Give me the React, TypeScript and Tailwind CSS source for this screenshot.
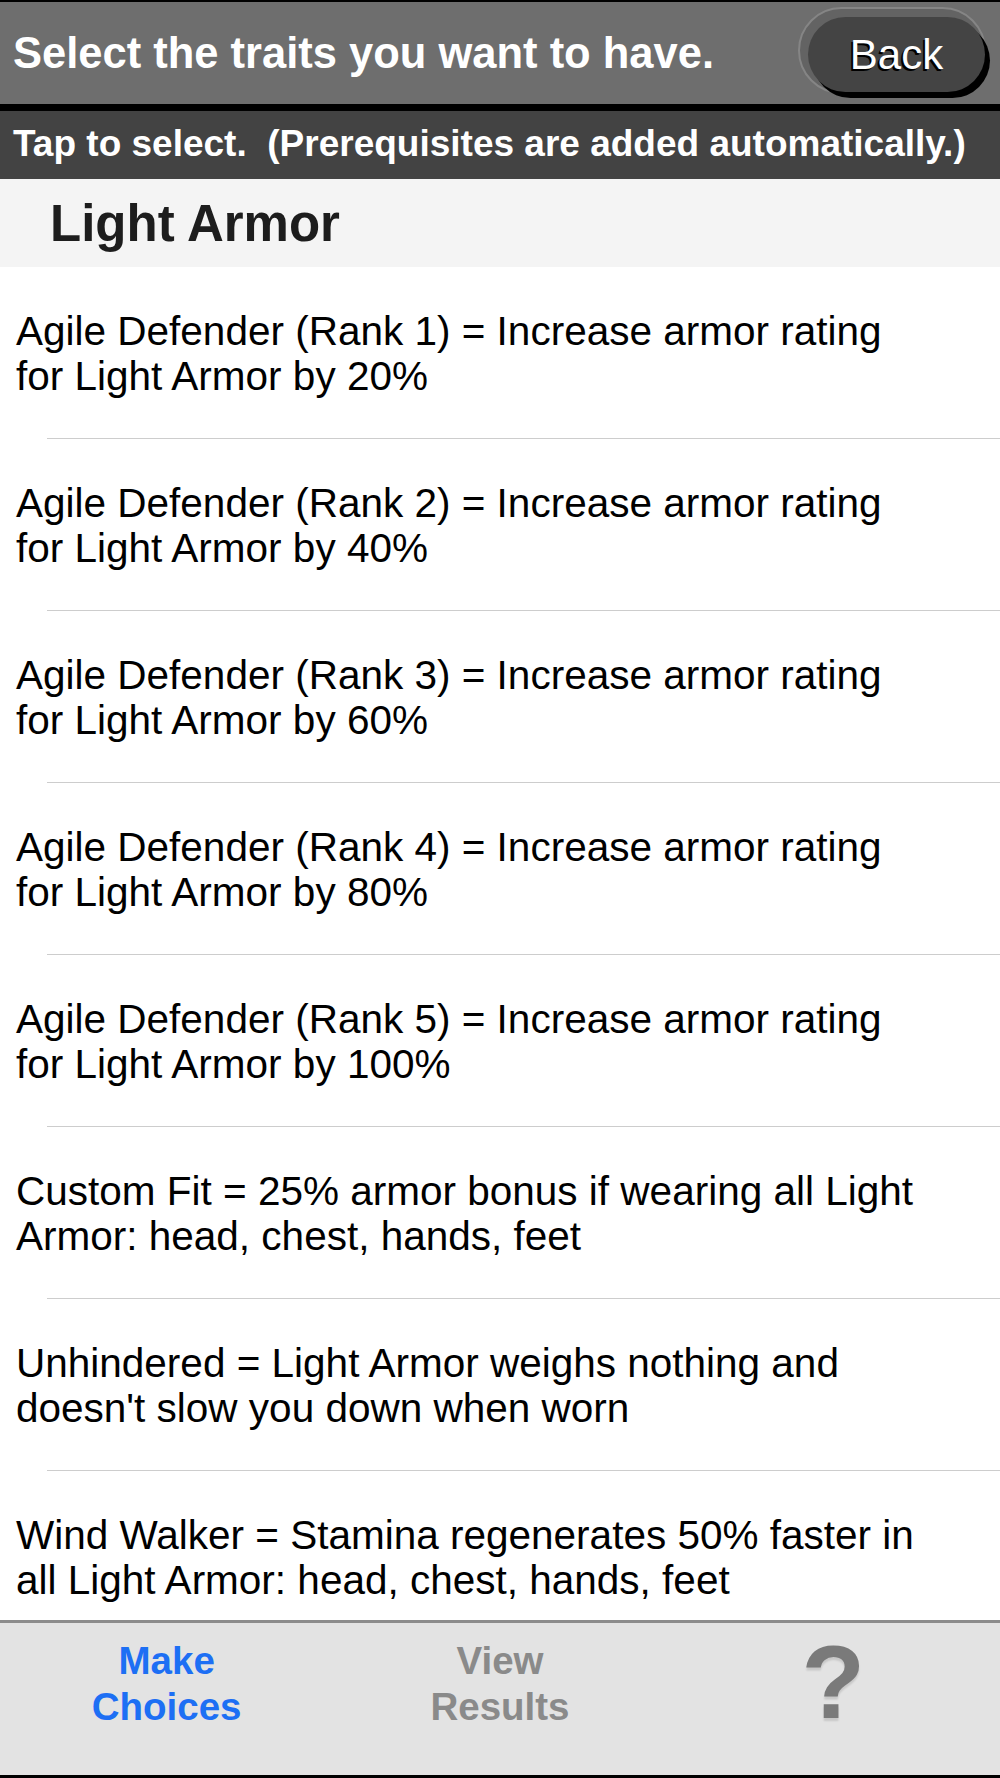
import React from "react";

const traits = [
  ["Agile Defender (Rank 1) = Increase armor rating", "for Light Armor by 20%"],
  ["Agile Defender (Rank 2) = Increase armor rating", "for Light Armor by 40%"],
  ["Agile Defender (Rank 3) = Increase armor rating", "for Light Armor by 60%"],
  ["Agile Defender (Rank 4) = Increase armor rating", "for Light Armor by 80%"],
  ["Agile Defender (Rank 5) = Increase armor rating", "for Light Armor by 100%"],
  ["Custom Fit = 25% armor bonus if wearing all Light", "Armor: head, chest, hands, feet"],
  ["Unhindered = Light Armor weighs nothing and", "doesn't slow you down when worn"],
  ["Wind Walker = Stamina regenerates 50% faster in", "all Light Armor: head, chest, hands, feet"],
];

export default function App() {
  return (
    <main className="w-[1000px] h-[1778px] flex flex-col overflow-hidden bg-white font-['Liberation_Sans',Arial,sans-serif]">
      {/* Top bar */}
      <div className="border-t-2 border-black bg-[#6e6e6e] h-[104px] flex justify-between items-center pl-[13px] pr-[14px]">
        <h1 className="text-[43.5px] leading-[50px] font-bold text-white whitespace-nowrap">
          Select the traits you want to have.
        </h1>
        <div className="self-start mt-[5px] w-[188px] h-[87px] rounded-full border-2 border-[#858585] bg-[#636363] pl-[8px] pt-[8px] flex">
          <div className="w-[177px] h-[75px] shrink-0 rounded-full bg-[#444444] shadow-[5px_6px_0_#000] flex items-center justify-center">
            <span className="text-[42px] leading-none text-white [text-shadow:-2px_2px_0_#000]">
              Back
            </span>
          </div>
        </div>
      </div>

      <div className="h-[7px] bg-black" />

      {/* Hint bar */}
      <div className="h-[68px] bg-[#434343] flex items-center pl-[13px] pb-[3px]">
        <p className="text-[37px] leading-[42px] font-bold text-white whitespace-pre">
          Tap to select.  (Prerequisites are added automatically.)
        </p>
      </div>

      {/* Section header */}
      <div className="h-[88px] bg-[#f4f4f4] flex items-center pl-[50px]">
        <h2 className="text-[51px] leading-[57px] font-bold text-[#1d1d1d]">Light Armor</h2>
      </div>

      {/* List */}
      <div className="flex-1 overflow-hidden">
        {traits.map((t, i) => (
          <div key={i} className="h-[172px] shrink-0 flex flex-col">
            <div className="h-[171px] pt-[42px] pl-[16px] text-[40.5px] leading-[45px] text-black whitespace-nowrap">
              <div>{t[0]}</div>
              <div>{t[1]}</div>
            </div>
            <div className="h-px ml-[47px] bg-[#cdcdcd]" />
          </div>
        ))}
      </div>

      {/* Tab bar */}
      <div className="h-[158px] shrink-0 border-t-[3px] border-[#8c8c8c] border-b-[3px] border-b-black bg-[#e3e3e3] grid grid-cols-3">
        <div className="pt-[15px] flex flex-col items-center text-[38.5px] leading-[46px] font-bold text-[#1d6ff4]">
          <span>Make</span>
          <span>Choices</span>
        </div>
        <div className="pt-[15px] flex flex-col items-center text-[38.5px] leading-[46px] font-bold text-[#8a8a8a]">
          <span>View</span>
          <span>Results</span>
        </div>
        <div className="pt-[7px] flex flex-col items-center">
          <span className="text-[104px] leading-[104px] font-bold text-[#7a7a7a] [text-shadow:0_3px_2px_rgba(0,0,0,0.12)]">
            ?
          </span>
        </div>
      </div>
    </main>
  );
}
